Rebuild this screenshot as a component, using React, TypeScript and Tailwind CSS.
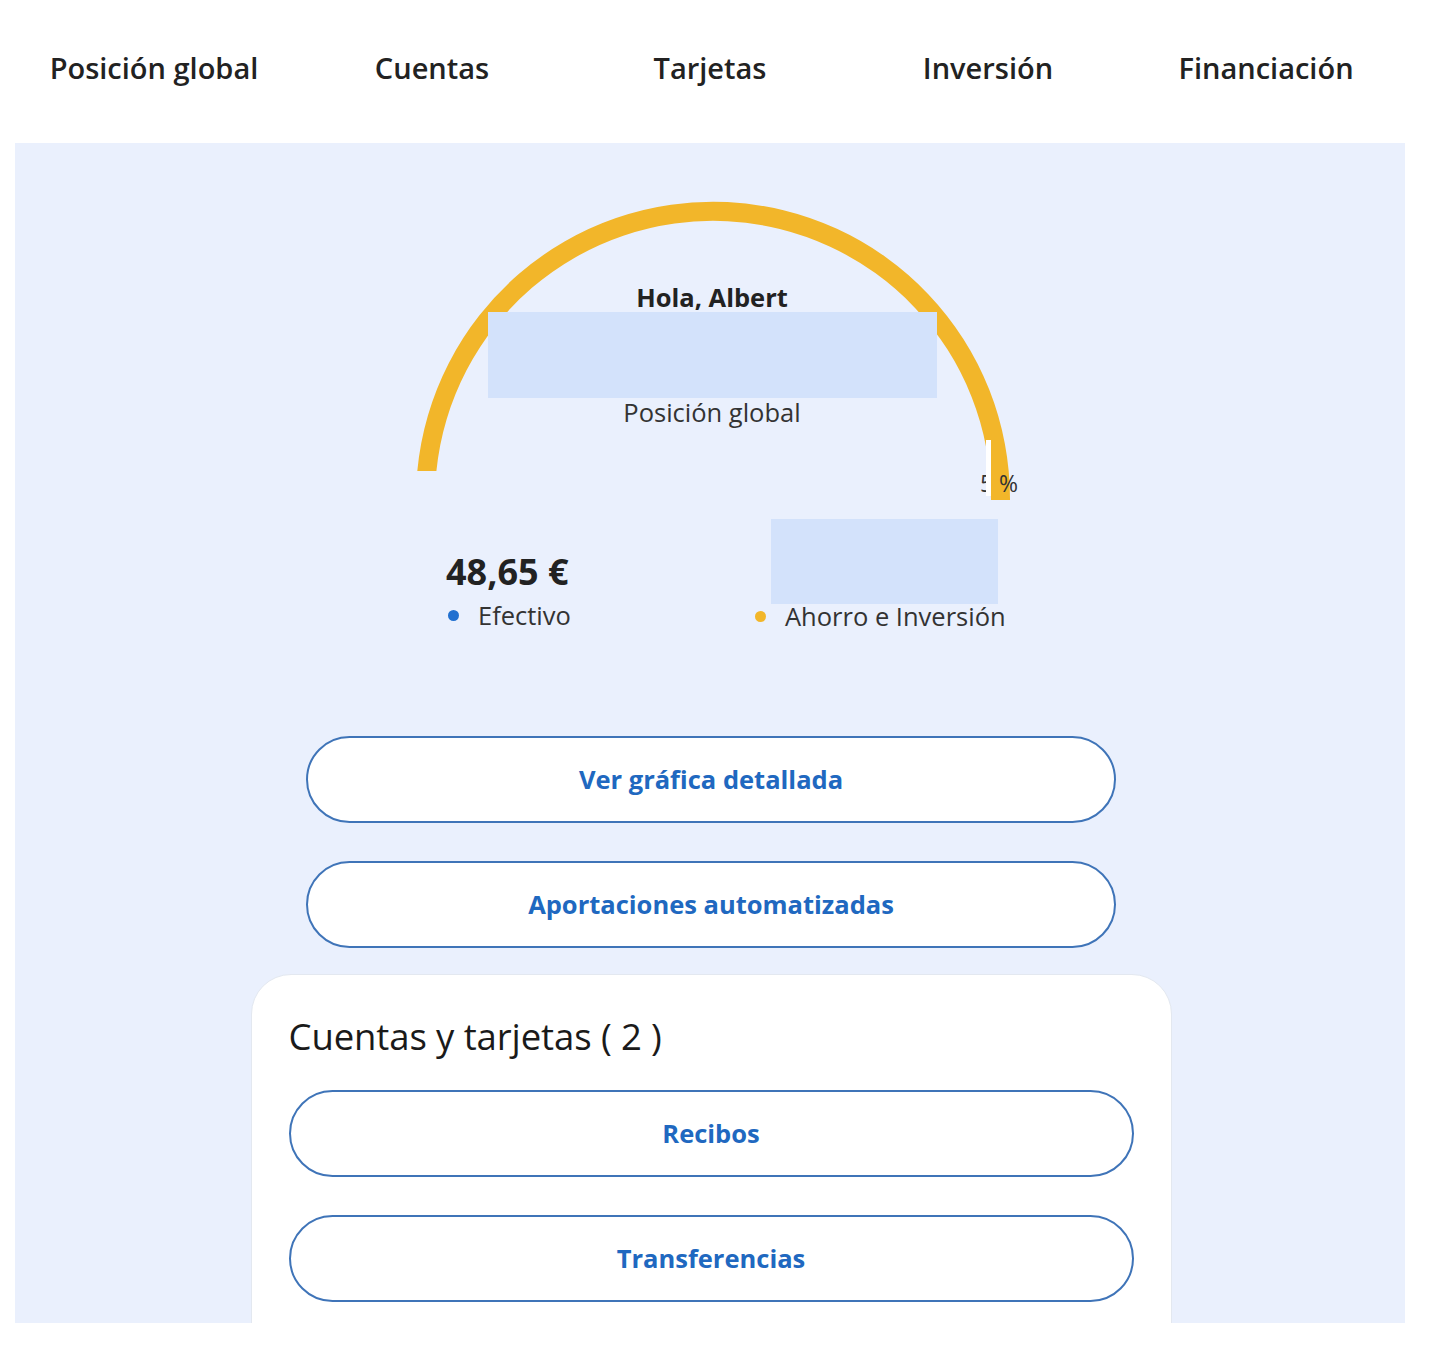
const tabs = ['Posición global', 'Cuentas', 'Tarjetas', 'Inversión', 'Financiación']

function OutlineButton({ label }: { label: string }) {
  return (
    <button className="flex h-[87px] w-full items-center justify-center rounded-full border-2 border-[#3f74b8] bg-white text-[25.5px] font-bold text-[#2068c0]">
      {label}
    </button>
  )
}

// half-donut gauge, drawn in panel coordinates
function GaugeArc() {
  return (
    <svg className="absolute left-0 top-0" width="1390" height="376" viewBox="0 0 1390 376">
      <text x="965" y="349" fontSize="23" fill="#333" fontFamily="Open Sans">5</text>
      <path
        d="M 402.3 328 A 297 297 0 0 1 995 357 L 976 357 A 278 278 0 0 0 421.4 328 Z"
        fill="#f2b62a"
      />
      <rect x="971" y="297" width="5" height="56" fill="#ffffff" />
      <text x="984" y="349" fontSize="23" fill="#333" fontFamily="Open Sans">%</text>
    </svg>
  )
}

export default function App() {
  return (
    <div className="min-h-screen bg-white font-['Open_Sans',sans-serif] text-[#2b2b2b]">
      <nav className="grid h-[143px] w-[1420px] grid-cols-5 items-center px-[15px] pb-[8px]">
        {tabs.map((t) => (
          <span key={t} className="text-center text-[29px] font-semibold text-[#222]">
            {t}
          </span>
        ))}
      </nav>

      <main className="ml-[15px] h-[1180px] w-[1390px] overflow-hidden bg-[#eaf0fd]">
        <section className="relative h-[376px]">
          <GaugeArc />
          <div className="relative flex flex-col items-center pl-[4px] pt-[139px]">
            <p className="text-[25.5px] font-bold leading-[30px] text-[#222]">Hola, Albert</p>
            <div className="h-[86px] w-[449px] bg-[#d3e2fb]" />
            <p className="text-[25.5px] leading-[28px] text-[#333]">Posición global</p>
          </div>
        </section>

        <section className="ml-[431px] flex">
          <div className="w-[307px] pt-[32px]">
            <p className="text-[36px] font-bold leading-[42px] text-[#222]">48,65 €</p>
            <div className="mt-[7px] flex items-center gap-[19px] pl-[2px]">
              <span className="h-[11px] w-[11px] rounded-full bg-[#2170d0]" />
              <span className="text-[25.5px] leading-[30px] text-[#333]">Efectivo</span>
            </div>
          </div>
          <div>
            <div className="ml-[18px] h-[85px] w-[227px] bg-[#d3e2fb]" />
            <div className="-mt-[3px] flex items-center gap-[19px] pl-[2px]">
              <span className="h-[11px] w-[11px] rounded-full bg-[#f2b62a]" />
              <span className="text-[25.5px] leading-[30px] text-[#333]">Ahorro e Inversión</span>
            </div>
          </div>
        </section>

        <div className="mx-auto mt-[105px] flex w-[812px] flex-col gap-[38px] pl-[2px]">
          <OutlineButton label="Ver gráfica detallada" />
          <OutlineButton label="Aportaciones automatizadas" />
        </div>

        <section className="mx-auto mt-[26px] w-[921px] translate-x-[1px] rounded-t-[40px] border border-[#e3e8f0] bg-white px-[37px] pt-[37px] pb-[40px]">
          <h2 className="text-[36.5px] leading-[48px] tracking-[-0.1px] text-[#1a1a1a]">Cuentas y tarjetas ( 2 )</h2>
          <div className="mt-[30px] flex flex-col gap-[38px]">
            <OutlineButton label="Recibos" />
            <OutlineButton label="Transferencias" />
          </div>
        </section>
      </main>
    </div>
  )
}
